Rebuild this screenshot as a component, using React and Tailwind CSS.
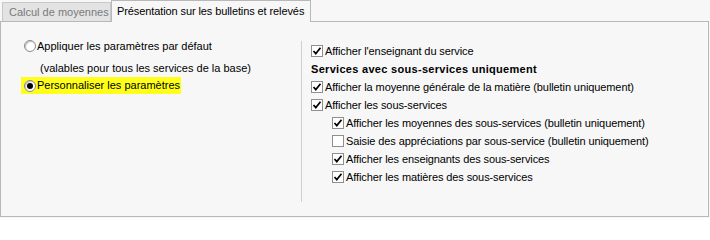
import React from "react";

function Check({ checked }) {
  return (
    <span className="w-[12px] h-[12px] border border-[#8f8f8f] bg-white flex items-center justify-center shrink-0">
      {checked && (
        <svg width="10" height="10" viewBox="0 0 10 10">
          <path d="M1.5 5 L3.8 7.6 L8.5 1.8" fill="none" stroke="#000" strokeWidth="1.7" />
        </svg>
      )}
    </span>
  );
}

function Radio({ checked }) {
  return (
    <span className="w-[12px] h-[12px] rounded-full border border-[#8a8a8a] bg-white flex items-center justify-center shrink-0 shadow-[inset_1px_1px_1px_rgba(0,0,0,0.25)]">
      {checked && <span className="w-[6px] h-[6px] rounded-full bg-black" />}
    </span>
  );
}

function CheckRow({ checked, children, indent }) {
  return (
    <div className={`h-[18px] flex items-center ${indent ? "pl-[21px]" : ""}`}>
      <Check checked={checked} />
      <span className="ml-[2px] whitespace-nowrap tracking-[-0.1px]">{children}</span>
    </div>
  );
}

export default function App() {
  return (
    <div className="w-[710px] h-[218px] bg-[#f7f7f7] text-[11px] text-black leading-none font-['Liberation_Sans',Arial,sans-serif]">
      <div className="h-[21px] flex items-end pl-[2px]">
        <div className="h-[19px] w-[109px] bg-[#e3e3e3] border border-[#c8c8c8] border-b-0 flex items-center pl-[6px] text-[#7a7a7a] whitespace-nowrap">
          Calcul de moyennes
        </div>
        <div className="relative z-10 h-[22px] -mb-px w-[200px] bg-[#f7f7f7] border border-[#b8b8b8] border-b-0 flex items-center pl-[5px] whitespace-nowrap tracking-[-0.1px]">
          Présentation sur les bulletins et relevés
        </div>
      </div>
      <div className="w-[709px] h-[196px] border border-[#b8b8b8] flex">
        <div className="w-[300px] pl-[20px] pt-[15px]">
          <div className="h-[18px] flex items-center pl-[3px]">
            <Radio />
            <span className="ml-[1px] whitespace-nowrap">Appliquer les paramètres par défaut</span>
          </div>
          <div className="h-[18px] mt-[4px] flex items-center pl-[19px] whitespace-nowrap">
            (valables pour tous les services de la base)
          </div>
          <div className="h-[17px] w-[160px] bg-[#ffff19] flex items-center pl-[3px]">
            <Radio checked />
            <span className="ml-[1px] whitespace-nowrap">Personnaliser les paramètres</span>
          </div>
        </div>
        <div className="mt-[19px] h-[161px] border-l border-[#d0d0d0] pl-[9px] pt-[1px]">
          <CheckRow checked>Afficher l'enseignant du service</CheckRow>
          <div className="h-[18px] flex items-center font-bold whitespace-nowrap tracking-[0.3px]">
            Services avec sous-services uniquement
          </div>
          <CheckRow checked>Afficher la moyenne générale de la matière (bulletin uniquement)</CheckRow>
          <CheckRow checked>Afficher les sous-services</CheckRow>
          <CheckRow checked indent>Afficher les moyennes des sous-services (bulletin uniquement)</CheckRow>
          <CheckRow indent>Saisie des appréciations par sous-service (bulletin uniquement)</CheckRow>
          <CheckRow checked indent>Afficher les enseignants des sous-services</CheckRow>
          <CheckRow checked indent>Afficher les matières des sous-services</CheckRow>
        </div>
      </div>
    </div>
  );
}
